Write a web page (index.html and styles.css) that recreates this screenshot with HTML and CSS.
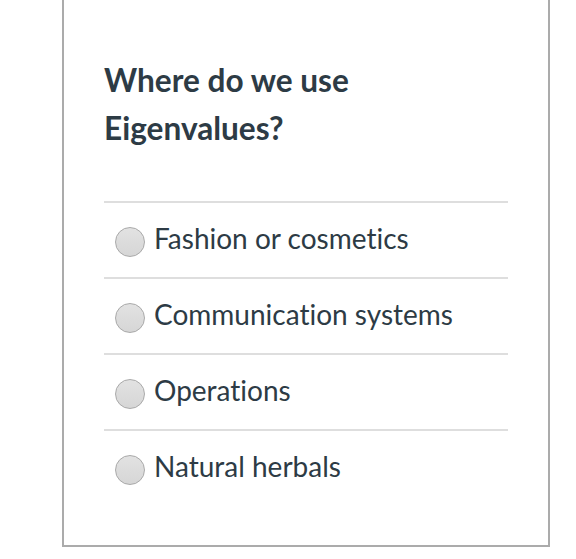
FILE: index.html
```html
<!DOCTYPE html>
<html>
<head>
<meta charset="utf-8">
<link rel="stylesheet" href="styles.css">
</head>
<body>
<div class="card">
  <h2 class="question">Where do we use Eigenvalues?</h2>
  <ul class="answers">
    <li class="answer"><span class="radio"></span><span class="label">Fashion or cosmetics</span></li>
    <li class="answer"><span class="radio"></span><span class="label">Communication systems</span></li>
    <li class="answer"><span class="radio"></span><span class="label">Operations</span></li>
    <li class="answer"><span class="radio"></span><span class="label">Natural herbals</span></li>
  </ul>
</div>
</body>
</html>
```
FILE: styles.css
```css
html, body {
  margin: 0;
  padding: 0;
  background: #fff;
}
body {
  font-family: Lato, "Liberation Sans", sans-serif;
  color: #2d3b45;
  font-variant-ligatures: none;
}
.card {
  box-sizing: border-box;
  margin-left: 62px;
  width: 488px;
  height: 547px;
  border: 2px solid #ababab;
  border-top: none;
  padding: 56px 40px 0 40px;
}
.question {
  margin: 0;
  font-size: 31.6px;
  font-weight: 700;
  line-height: 48px;
  width: 300px;
}
.answers {
  list-style: none;
  margin: 49px 0 0 0;
  padding: 0;
}
.answer {
  display: flex;
  align-items: center;
  height: 74px;
  border-top: 2px solid #dedede;
}
.radio {
  box-sizing: border-box;
  width: 30px;
  height: 30px;
  border-radius: 50%;
  border: 1px solid #a9a9a9;
  background: linear-gradient(#e2e2e2, #d6d6d6);
  margin-left: 11px;
  margin-top: 4px;
  flex: none;
}
.label {
  margin-left: 9px;
  margin-top: -5px;
  font-size: 28px;
  color: #2d3b45;
}
```
